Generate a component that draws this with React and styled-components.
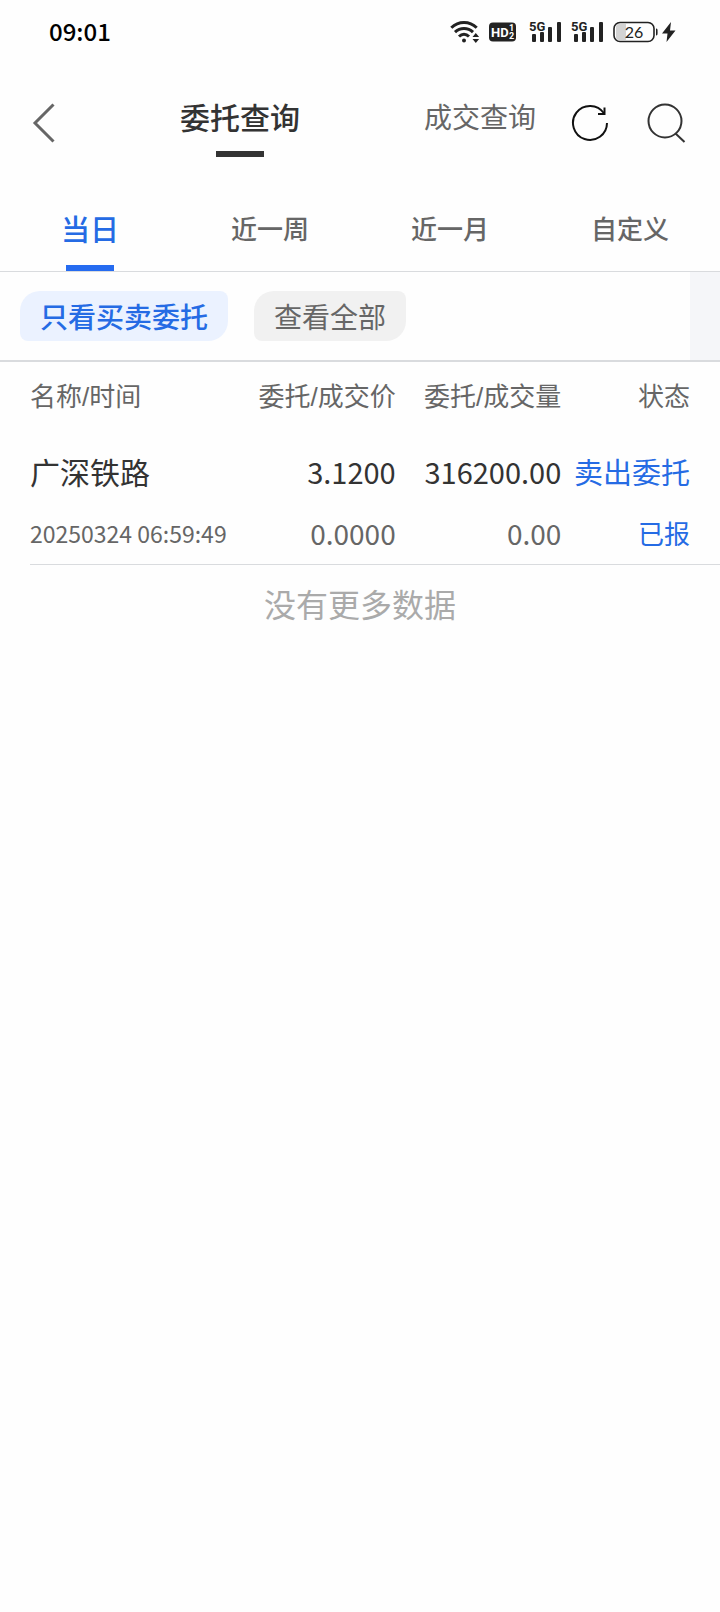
import React, { useState } from "react"
import styled, { createGlobalStyle } from "styled-components"

const GlobalStyle = createGlobalStyle`
  * {
    box-sizing: border-box;
  }

  body {
    margin: 0;
    background: #fefefe;
    color: #333;
    font-family: "Noto Sans CJK SC", sans-serif;
  }

  button {
    padding: 0;
    border: 0;
    background: none;
    color: inherit;
    font: inherit;
    white-space: nowrap;
    cursor: pointer;
  }

  svg {
    display: block;
    flex: none;
  }
`

const StatusBar = styled.div`
  display: flex;
  align-items: center;
  justify-content: space-between;
  height: 64px;
  padding: 0 44px 0 49px;
  color: #000;
  font-size: 24px;
  font-weight: 500;
`

const Clock = styled.span`
  padding-bottom: 4px;
`

const StatusIcons = styled.div`
  display: flex;
  align-items: center;
  gap: 9px;
`

const Header = styled.header`
  display: grid;
  grid-template-columns: repeat(6, minmax(0, 1fr));
  height: 118px;
`

const BackButton = styled.button`
  display: flex;
  align-items: center;
  height: 118px;
  padding-left: 32px;
`

const PageTab = styled.button`
  display: flex;
  flex-direction: column;
  align-items: center;
  grid-column: span 2;
  padding-top: 30px;
  color: ${(props) => (props.$active ? "#333" : "#666")};
  font-size: ${(props) => (props.$active ? 30 : 28)}px;
  font-weight: ${(props) => (props.$active ? 500 : 400)};
  line-height: 44px;

  &::after {
    content: "";
    width: 48px;
    height: 6px;
    margin-top: 13px;
    background: ${(props) => (props.$active ? "#333" : "transparent")};
  }
`

const Tools = styled.div`
  display: flex;
  align-items: center;
  justify-self: end;
  gap: 38px;
  height: 118px;
  padding-right: 34px;
`

const RangeTabs = styled.nav`
  display: grid;
  grid-template-columns: repeat(4, 1fr);
  height: 90px;
  border-bottom: 1px solid #d9dbde;
`

const RangeTab = styled.button`
  display: flex;
  flex-direction: column;
  align-items: center;
  justify-content: space-between;
  padding-top: 24px;
  color: ${(props) => (props.$active ? "#256be4" : "#666")};
  font-size: ${(props) => (props.$active ? 29 : 26)}px;
  font-weight: 500;
  line-height: 44px;

  &::after {
    content: "";
    width: 48px;
    height: 6px;
    background: ${(props) => (props.$active ? "#256bf0" : "transparent")};
  }
`

const Filters = styled.div`
  display: flex;
  align-items: center;
  gap: 26px;
  height: 90px;
  padding-left: 20px;
  border-bottom: 2px solid #d9dbde;
`

const Chip = styled.button`
  height: 50px;
  padding: 0 20px;
  border-radius: 20px 8px;
  background: ${(props) => (props.$active ? "#ebf2ff" : "#f1f1f1")};
  color: ${(props) => (props.$active ? "#256be4" : "#666")};
  font-size: 28px;
  font-weight: ${(props) => (props.$active ? 500 : 400)};
  line-height: 50px;
`

const FilterEdge = styled.div`
  align-self: stretch;
  width: 30px;
  margin-left: auto;
  background: #f5f6f9;
`

const Orders = styled.main`
  padding-left: 30px;
`

const OrderTable = styled.table`
  width: 100%;
  border-spacing: 0;
  table-layout: fixed;
  white-space: nowrap;
`

const HeadCell = styled.th`
  width: ${(props) => props.$width};
  height: 70px;
  padding: 0;
  color: #666;
  font-family: "Liberation Sans", "Noto Sans CJK SC", sans-serif;
  font-size: 26px;
  font-weight: 400;
  line-height: 40px;
  text-align: right;

  &:first-child {
    text-align: left;
  }

  &:last-child {
    padding-right: 30px;
  }
`

const Cell = styled.td`
  padding: 0 0 8px;
  border-bottom: 1px solid #d9dbde;
  text-align: right;

  &:first-child {
    text-align: left;
  }

  &:last-child {
    padding-right: 30px;
    color: #256be4;
  }
`

const Primary = styled.div`
  font-size: ${(props) => props.$size || 29}px;
  line-height: 78px;
`

const Secondary = styled.div`
  color: ${(props) => props.$color || "#666"};
  font-size: ${(props) => props.$size || 28}px;
  line-height: 46px;
`

const EndNote = styled.p`
  margin: 14px 0 0;
  color: #aaa;
  font-size: 32px;
  line-height: 48px;
  text-align: center;
`

const WifiIcon = () => (
  <svg width="30" height="24" viewBox="0 0 30 24" fill="none">
    <g stroke="#222" strokeWidth="3">
      <path d="M1.3 7.8C8.5 0.6 19.5 0.6 26.7 7.8" />
      <path d="M5 12.2c5.2-5 12.8-5 18 0" />
      <path d="M9 16.5c3-2.9 7-2.9 10 0" />
    </g>
    <circle cx="14" cy="20.5" r="2" fill="#222" />
    <path d="M22.5 17l3.3-4 3.3 4zM22.5 19h6.6l-3.3 4z" fill="#222" />
  </svg>
)

const HdIcon = () => (
  <svg
    width="31"
    height="20"
    viewBox="0 0 31 20"
    fontFamily="Roboto, sans-serif"
    fontWeight="700"
  >
    <rect width="27" height="19" y="0.5" rx="4" fill="#222" />
    <g fill="#fff">
      <text x="2" y="15" fontSize="13">
        HD
      </text>
      <text x="20" y="9" fontSize="9">
        1
      </text>
      <text x="20" y="17" fontSize="9">
        2
      </text>
    </g>
  </svg>
)

const SignalIcon = () => (
  <svg width="33" height="24" viewBox="0 0 33 24" fill="#222">
    <text
      x="0"
      y="11"
      fontSize="13"
      fontWeight="700"
      fontFamily="Roboto, sans-serif"
    >
      5G
    </text>
    <rect x="3" y="14" width="4" height="8" rx="1" />
    <rect x="11" y="12" width="4" height="10" rx="1" />
    <rect x="19" y="7" width="4" height="15" rx="1" />
    <rect x="28" y="2" width="4" height="20" rx="1" />
  </svg>
)

const BatteryIcon = () => (
  <svg width="63" height="22" viewBox="0 0 63 22">
    <path d="M6 3h7v16H6a3 3 0 0 1-3-3V6a3 3 0 0 1 3-3z" fill="#d3d3d3" />
    <rect
      x="1"
      y="1.5"
      width="40"
      height="19"
      rx="6"
      fill="none"
      stroke="#222"
      strokeWidth="1.6"
    />
    <path d="M43 7.5c1.6 0 1.6 1 1.6 3.5s0 3.5-1.6 3.5z" fill="#222" />
    <text
      x="21"
      y="17"
      fontSize="16"
      fontWeight="400"
      fontFamily="Lato, sans-serif"
      textAnchor="middle"
      fill="#222"
    >
      26
    </text>
    <path d="M58 1L49 12.5h5.5L53.5 21 62.5 9.5H57z" fill="#222" />
  </svg>
)

const BackIcon = () => (
  <svg width="24" height="40" viewBox="0 0 24 40" fill="none">
    <path d="M21.5 1.5L3 20l18.5 18.5" stroke="#666" strokeWidth="3" />
  </svg>
)

const RefreshIcon = () => (
  <svg
    width="38"
    height="38"
    viewBox="0 0 38 38"
    fill="none"
    stroke="#111"
    strokeWidth="2"
  >
    <path d="M36 19A17 17 0 1 1 33 9.3" />
    <path d="M33.5 3.5v6.500h-6.500" />
  </svg>
)

const SearchIcon = () => (
  <svg
    width="39"
    height="40"
    viewBox="0 0 39 40"
    fill="none"
    stroke="#333"
    strokeWidth="2"
  >
    <circle cx="18" cy="18" r="16.5" />
    <path d="M28.5 30.5l9 8.5" />
  </svg>
)

const pages = ["委托查询", "成交查询"]
const ranges = ["当日", "近一周", "近一月", "自定义"]
const filters = ["只看买卖委托", "查看全部"]

const columns = [
  { title: "名称/时间", width: "29%" },
  { title: "委托/成交价", width: "24%" },
  { title: "委托/成交量", width: "24%" },
  { title: "状态", width: "23%" },
]

const orders = [
  {
    name: "广深铁路",
    time: "20250324 06:59:49",
    price: "3.1200",
    dealPrice: "0.0000",
    amount: "316200.00",
    dealAmount: "0.00",
    side: "卖出委托",
    state: "已报",
  },
]

const App = () => {
  const [page, setPage] = useState(0)
  const [range, setRange] = useState(0)
  const [filter, setFilter] = useState(0)

  return (
    <>
      <GlobalStyle />
      <StatusBar>
        <Clock>09:01</Clock>
        <StatusIcons>
          <WifiIcon />
          <HdIcon />
          <SignalIcon />
          <SignalIcon />
          <BatteryIcon />
        </StatusIcons>
      </StatusBar>
      <Header>
        <BackButton aria-label="返回">
          <BackIcon />
        </BackButton>
        {pages.map((label, i) => (
          <PageTab key={label} $active={i === page} onClick={() => setPage(i)}>
            {label}
          </PageTab>
        ))}
        <Tools>
          <button aria-label="刷新">
            <RefreshIcon />
          </button>
          <button aria-label="搜索">
            <SearchIcon />
          </button>
        </Tools>
      </Header>
      <RangeTabs>
        {ranges.map((label, i) => (
          <RangeTab
            key={label}
            $active={i === range}
            onClick={() => setRange(i)}
          >
            {label}
          </RangeTab>
        ))}
      </RangeTabs>
      <Filters>
        {filters.map((label, i) => (
          <Chip key={label} $active={i === filter} onClick={() => setFilter(i)}>
            {label}
          </Chip>
        ))}
        <FilterEdge />
      </Filters>
      <Orders>
        <OrderTable>
          <thead>
            <tr>
              {columns.map((col) => (
                <HeadCell key={col.title} $width={col.width} scope="col">
                  {col.title}
                </HeadCell>
              ))}
            </tr>
          </thead>
          <tbody>
            {orders.map((order) => (
              <tr key={order.time}>
                <Cell>
                  <Primary $size={30}>{order.name}</Primary>
                  <Secondary $size={23}>{order.time}</Secondary>
                </Cell>
                <Cell>
                  <Primary>{order.price}</Primary>
                  <Secondary>{order.dealPrice}</Secondary>
                </Cell>
                <Cell>
                  <Primary>{order.amount}</Primary>
                  <Secondary>{order.dealAmount}</Secondary>
                </Cell>
                <Cell>
                  <Primary>{order.side}</Primary>
                  <Secondary $size={26} $color="#256be4">
                    {order.state}
                  </Secondary>
                </Cell>
              </tr>
            ))}
          </tbody>
        </OrderTable>
      </Orders>
      <EndNote>没有更多数据</EndNote>
    </>
  )
}

export default App
